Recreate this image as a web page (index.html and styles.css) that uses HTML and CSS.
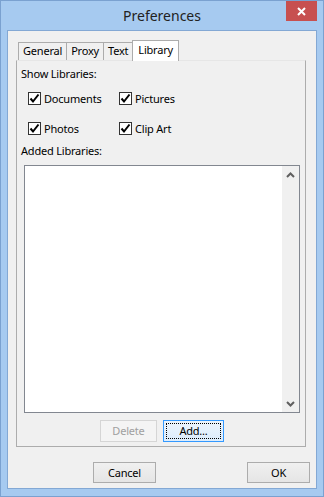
FILE: index.html
```html
<!DOCTYPE html>
<html lang="en">
<head>
    <meta charset="utf-8" />
    <title>Preferences</title>
    <link rel="stylesheet" href="styles.css">
</head>
<body>
<div class="window">
    <div class="titlebar">
        <span class="spacer"></span>
        <div class="title">Preferences</div>
        <div class="close">
            <svg width="9" height="9" viewBox="0 0 9 9"><path d="M1 1L8 8M8 1L1 8" stroke="#fff" stroke-width="2"/></svg>
        </div>
    </div>

    <div class="client">
        <div class="tabs">
            <div class="tab">General</div>
            <div class="tab">Proxy</div>
            <div class="tab">Text</div>
            <div class="tab tab--active">Library</div>
        </div>

        <section class="panel">
            <div class="label">Show Libraries:</div>
            <div class="checks">
                <label class="check"><span class="box"><svg width="11" height="11" viewBox="0 0 11 11"><path d="M1.5 5.5L4 8.5L9.5 1.5" fill="none" stroke="#000" stroke-width="2"/></svg></span>Documents</label>
                <label class="check"><span class="box"><svg width="11" height="11" viewBox="0 0 11 11"><path d="M1.5 5.5L4 8.5L9.5 1.5" fill="none" stroke="#000" stroke-width="2"/></svg></span>Pictures</label>
                <label class="check"><span class="box"><svg width="11" height="11" viewBox="0 0 11 11"><path d="M1.5 5.5L4 8.5L9.5 1.5" fill="none" stroke="#000" stroke-width="2"/></svg></span>Photos</label>
                <label class="check"><span class="box"><svg width="11" height="11" viewBox="0 0 11 11"><path d="M1.5 5.5L4 8.5L9.5 1.5" fill="none" stroke="#000" stroke-width="2"/></svg></span>Clip Art</label>
            </div>
            <div class="label label--second">Added Libraries:</div>

            <div class="listbox">
                <div class="list"></div>
                <div class="scrollbar">
                    <svg width="9" height="6" viewBox="0 0 9 6"><path d="M1 5L4.5 1.5L8 5" fill="none" stroke="#606060" stroke-width="2"/></svg>
                    <svg width="9" height="6" viewBox="0 0 9 6"><path d="M1 1L4.5 4.5L8 1" fill="none" stroke="#606060" stroke-width="2"/></svg>
                </div>
            </div>

            <div class="list-buttons">
                <div class="btn btn--disabled btn--delete">Delete</div>
                <div class="btn btn--focus btn--add"><span class="focus">Add...</span></div>
            </div>
        </section>

        <div class="dialog-buttons">
            <div class="btn btn--dialog">Cancel</div>
            <div class="btn btn--dialog">OK</div>
        </div>
    </div>
</div>
</body>
</html>
```

FILE: styles.css
```css
:root{
    --frame:#a6caf0;
    --frame-edge:#7aa1d0;
    --face:#f0f0f0;
    --tb-border:#acacac;
}
*{
    box-sizing:border-box;
}
body{
    margin:0;
    font-family:"Noto Sans",Arial,sans-serif;
    font-size:11px;
    letter-spacing:-0.2px;
    color:#000;
}
.window{
    width:324px;
    height:497px;
    background:var(--frame);
    border:1px solid var(--frame-edge);
    padding:0 6px 7px;
    display:flex;
    flex-direction:column;
}
.titlebar{
    height:29px;
    display:flex;
    align-items:flex-start;
}
.spacer{
    width:31px;
}
.title{
    flex:1;
    text-align:center;
    font-size:14px;
    letter-spacing:0;
    line-height:18px;
    padding-top:6px;
    color:#222;
}
.close{
    width:31px;
    height:20px;
    background:#c75050;
    display:flex;
    align-items:center;
    justify-content:center;
}
.client{
    flex:1;
    background:var(--face);
    border:1px solid #83a8d4;
    display:flex;
    flex-direction:column;
    padding-top:9px;
}
.tabs{
    height:20px;
    display:flex;
    align-items:flex-end;
    padding-left:10px;
    position:relative;
    z-index:1;
}
.tab{
    height:18px;
    line-height:16px;
    padding:0 4px;
    border:1px solid var(--tb-border);
    border-bottom:none;
    background:var(--face);
    margin-right:-1px;
}
.tab--active{
    height:21px;
    margin-bottom:-1px;
    padding:1px 5px 0;
    background:#fff;
}
.panel{
    margin:0 10px 0 8px;
    height:387px;
    border:1px solid var(--tb-border);
    border-top-color:#e6e6e6;
    padding:5px 5px 4px 7px;
    display:flex;
    flex-direction:column;
}
.label{
    line-height:16px;
    margin-left:-3px;
}
.label--second{
    margin-top:8px;
}
.checks{
    display:grid;
    grid-template-columns:91px 1fr;
    row-gap:17px;
    margin:10px 0 0 4px;
}
.check{
    display:flex;
    align-items:center;
    height:13px;
    line-height:16px;
    gap:3px;
}
.box{
    width:13px;
    height:13px;
    border:1px solid #333;
    background:#fff;
    display:flex;
    align-items:center;
    justify-content:center;
}
.listbox{
    margin-top:6px;
    height:248px;
    border:1px solid #828790;
    background:#fff;
    display:flex;
}
.list{
    flex:1;
}
.scrollbar{
    width:17px;
    background:var(--face);
    display:flex;
    flex-direction:column;
    justify-content:space-between;
    align-items:center;
    padding:6px 0 5px;
}
.list-buttons{
    margin-top:7px;
    display:flex;
    justify-content:center;
    gap:6px;
}
.btn{
    height:22px;
    border:1px solid var(--tb-border);
    background:linear-gradient(#f0f0f0,#e5e5e5);
    display:flex;
    align-items:center;
    justify-content:center;
    line-height:16px;
}
.btn--delete{
    width:57px;
}
.btn--add{
    width:61px;
}
.btn--disabled{
    color:#a0a0a0;
    border-color:#d5d5d5;
    background:#f4f4f4;
}
.btn--focus{
    border-color:#3399ff;
    background:linear-gradient(#ecf4fc,#dcecfc);
    padding:2px;
}
.focus{
    flex:1;
    align-self:stretch;
    border:1px dotted #000;
    display:flex;
    align-items:center;
    justify-content:center;
}
.dialog-buttons{
    margin-top:15px;
    display:flex;
    justify-content:flex-end;
    gap:91px;
    padding-right:6px;
}
.btn--dialog{
    width:63px;
    height:21px;
}
```
